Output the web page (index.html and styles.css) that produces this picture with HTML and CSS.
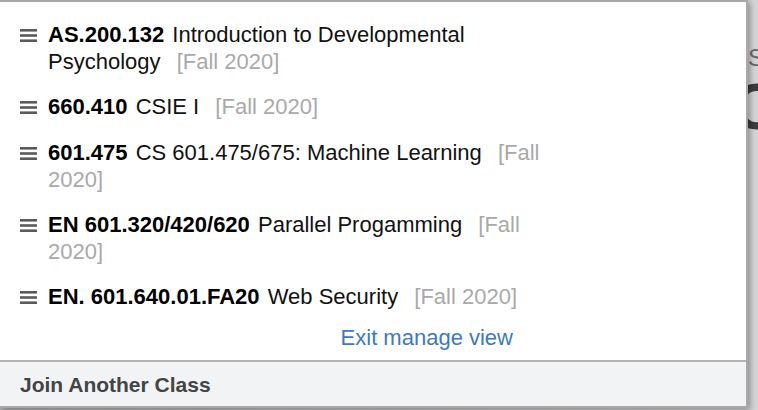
FILE: index.html
```html
<!DOCTYPE html>
<html>
<head>
<meta charset="utf-8">
<link rel="stylesheet" href="styles.css">
</head>
<body>
<div class="backdrop">
  <span class="bg-s">S</span>
  <span class="bg-o">O</span>
</div>
<div class="panel">
  <ul class="list">
    <li class="item">
      <span class="grip"><svg width="17" height="13" viewBox="0 0 17 13"><rect x="0" y="0" width="17" height="2.6" fill="#5a5a5a"/><rect x="0" y="5.2" width="17" height="2.6" fill="#5a5a5a"/><rect x="0" y="10.4" width="17" height="2.6" fill="#5a5a5a"/></svg></span>
      <div class="text"><b class="code">AS.200.132</b> <span class="title">Introduction to Developmental Psychology</span> <span class="term">[Fall 2020]</span></div>
    </li>
    <li class="item">
      <span class="grip"><svg width="17" height="13" viewBox="0 0 17 13"><rect x="0" y="0" width="17" height="2.6" fill="#5a5a5a"/><rect x="0" y="5.2" width="17" height="2.6" fill="#5a5a5a"/><rect x="0" y="10.4" width="17" height="2.6" fill="#5a5a5a"/></svg></span>
      <div class="text"><b class="code">660.410</b> <span class="title">CSIE I</span> <span class="term">[Fall 2020]</span></div>
    </li>
    <li class="item">
      <span class="grip"><svg width="17" height="13" viewBox="0 0 17 13"><rect x="0" y="0" width="17" height="2.6" fill="#5a5a5a"/><rect x="0" y="5.2" width="17" height="2.6" fill="#5a5a5a"/><rect x="0" y="10.4" width="17" height="2.6" fill="#5a5a5a"/></svg></span>
      <div class="text"><b class="code">601.475</b> <span class="title">CS 601.475/675: Machine Learning</span> <span class="term">[Fall 2020]</span></div>
    </li>
    <li class="item">
      <span class="grip"><svg width="17" height="13" viewBox="0 0 17 13"><rect x="0" y="0" width="17" height="2.6" fill="#5a5a5a"/><rect x="0" y="5.2" width="17" height="2.6" fill="#5a5a5a"/><rect x="0" y="10.4" width="17" height="2.6" fill="#5a5a5a"/></svg></span>
      <div class="text"><b class="code">EN 601.320/420/620</b> <span class="title">Parallel Progamming</span> <span class="term">[Fall 2020]</span></div>
    </li>
    <li class="item">
      <span class="grip"><svg width="17" height="13" viewBox="0 0 17 13"><rect x="0" y="0" width="17" height="2.6" fill="#5a5a5a"/><rect x="0" y="5.2" width="17" height="2.6" fill="#5a5a5a"/><rect x="0" y="10.4" width="17" height="2.6" fill="#5a5a5a"/></svg></span>
      <div class="text"><b class="code">EN. 601.640.01.FA20</b> <span class="title">Web Security</span> <span class="term">[Fall 2020]</span></div>
    </li>
  </ul>
  <div class="exit-row"><a class="exit" href="#">Exit manage view</a></div>
  <div class="footer">Join Another Class</div>
</div>
</body>
</html>
```
FILE: styles.css
```css
html, body {
  margin: 0;
  padding: 0;
}
body {
  width: 758px;
  height: 410px;
  overflow: hidden;
  position: relative;
  background: linear-gradient(90deg, #b3b3b5 0%, #d4d4d6 100%);
  font-family: "Liberation Sans", Arial, Helvetica, sans-serif;
}
.backdrop {
  position: absolute;
  inset: 0;
}
.bg-s {
  position: absolute;
  left: 748px;
  top: 44px;
  font-size: 24px;
  color: #6a6a6c;
}
.bg-o {
  position: absolute;
  left: 732px;
  top: 70px;
  font-size: 64px;
  font-weight: bold;
  color: #3c3c3e;
}
.panel {
  position: absolute;
  top: 0;
  left: 0;
  width: 746px;
  background: #fff;
  border-top: 2px solid #a8a8a8;
  border-right: 2px solid #a8a8a8;
  border-bottom: 2px solid #a8a8a8;
  box-shadow: 2px 2px 6px rgba(0, 0, 0, 0.35);
}
.list {
  list-style: none;
  margin: 0;
  padding: 19px 0 0 20px;
}
.item {
  display: flex;
  align-items: flex-start;
  margin-bottom: 18px;
}
.grip {
  display: flex;
  width: 17px;
  height: 28px;
  align-items: center;
  margin-right: 11px;
  flex: none;
}
.grip svg {
  display: block;
}
.text {
  width: 520px;
  font-size: 22px;
  line-height: 27px;
  color: #111;
}
.code {
  font-weight: bold;
  color: #000;
  margin-right: 2px;
}
.term {
  color: #a9a9a9;
  margin-left: 10px;
}
.exit-row {
  width: 513px;
  text-align: right;
  margin-top: -5px;
  padding-bottom: 9px;
}
.exit {
  font-size: 22px;
  line-height: 27px;
  color: #3d79c0;
  text-decoration: none;
}
.footer {
  border-top: 2px solid #b2b2b2;
  background: #f2f3f5;
  height: 44px;
  line-height: 46px;
  padding-left: 20px;
  font-size: 21px;
  font-weight: bold;
  color: #444;
}
```
